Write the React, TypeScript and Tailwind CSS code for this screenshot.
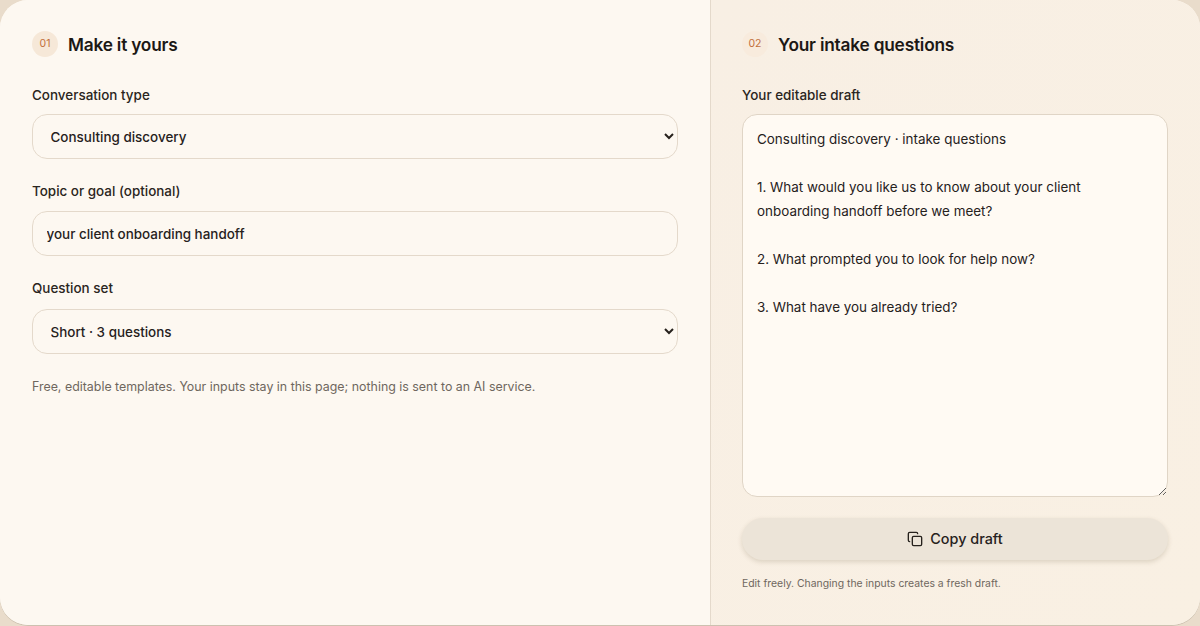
import React from "react";

const draft = `Consulting discovery · intake questions

1. What would you like us to know about your client onboarding handoff before we meet?

2. What prompted you to look for help now?

3. What have you already tried?`;

const fieldClass =
  "block h-[45px] w-full rounded-[15px] border border-[#e4d9cb] bg-[#fdf8f1] px-[13.5px] text-[13.44px] font-[450] text-[#26211c] outline-none";

function Heading({ n, title, faint }: { n: string; title: string; faint?: boolean }) {
  return (
    <div className="flex h-[26px] items-center gap-[10px]">
      <span
        className={`flex h-[26px] w-[26px] items-center justify-center rounded-full text-[10.5px] ${
          faint ? "bg-[#f8ebdd]" : "bg-[#f6e8d8]"
        } text-[#c2703c]`}
      >
        {n}
      </span>
      <h2 className="translate-y-[0.5px] text-[17.28px] font-semibold tracking-[-0.2px] text-[#1c1815]">{title}</h2>
    </div>
  );
}

const labelClass = "h-[19px] text-[13.44px] font-[450] leading-[19px] text-[#2a2520]";

export default function App() {
  return (
    <div className="h-[626px] w-[1200px] overflow-hidden bg-[#e9dccb] font-['Inter',sans-serif]">
      <div className="flex h-[625px] w-full overflow-hidden rounded-[28px] bg-[#fdf8f1] shadow-[0_1px_0_#cdc1b0]">
        <section className="h-full w-[711px] shrink-0 border-r border-[#e4d9cb] bg-[#fdf8f1] pl-[32px] pr-[32px] pt-[31px]">
          <Heading n="01" title="Make it yours" />
          <div className="mt-[29px]">
            <div className={`${labelClass} mb-[9px]`}>Conversation type</div>
            <select className={fieldClass} defaultValue="Consulting discovery">
              <option>Consulting discovery</option>
            </select>
          </div>
          <div className="mt-[23px]">
            <div className={`${labelClass} mb-[10px]`}>Topic or goal (optional)</div>
            <input className={fieldClass} defaultValue="your client onboarding handoff" />
          </div>
          <div className="mt-[23px]">
            <div className={`${labelClass} mb-[11px]`}>Question set</div>
            <select className={fieldClass} defaultValue="Short · 3 questions">
              <option>Short · 3 questions</option>
            </select>
          </div>
          <p className="mt-[23px] text-[12.4px] leading-[19px] text-[#6f675e]">
            Free, editable templates. Your inputs stay in this page; nothing is sent to an AI service.
          </p>
        </section>
        <section className="h-full flex-1 bg-gradient-to-br from-[#f8efe4] to-[#f9f0e3] pl-[31px] pr-[32px] pt-[31px]">
          <Heading n="02" title="Your intake questions" faint />
          <div className="mt-[29px]">
            <div className={`${labelClass} mb-[9px]`}>Your editable draft</div>
            <textarea
              className="block h-[383px] w-full rounded-[15px] border border-[#e0d5c6] bg-[#fffaf3] px-[14px] py-[11.5px] text-[13.44px] leading-[24.14px] text-[#26211c] outline-none"
              defaultValue={draft}
            />
          </div>
          <button className="mt-[21px] flex h-[42px] w-full items-center justify-center gap-[7px] rounded-[21px] bg-[#ece4d8] text-[14.4px] font-[450] text-[#26211c] shadow-[0_2px_5px_rgba(90,70,40,0.18)]">
            <svg width="16" height="16" viewBox="0 0 24 24" fill="none" stroke="currentColor" strokeWidth="2" strokeLinecap="round" strokeLinejoin="round">
              <rect x="8" y="8" width="14" height="14" rx="2" />
              <path d="M4 16c-1.1 0-2-.9-2-2V4c0-1.1.9-2 2-2h10c1.1 0 2 .9 2 2" />
            </svg>
            Copy draft
          </button>
          <p className="mt-[16px] text-[10.4px] leading-[16px] text-[#6f675e]">
            Edit freely. Changing the inputs creates a fresh draft.
          </p>
        </section>
      </div>
    </div>
  );
}
